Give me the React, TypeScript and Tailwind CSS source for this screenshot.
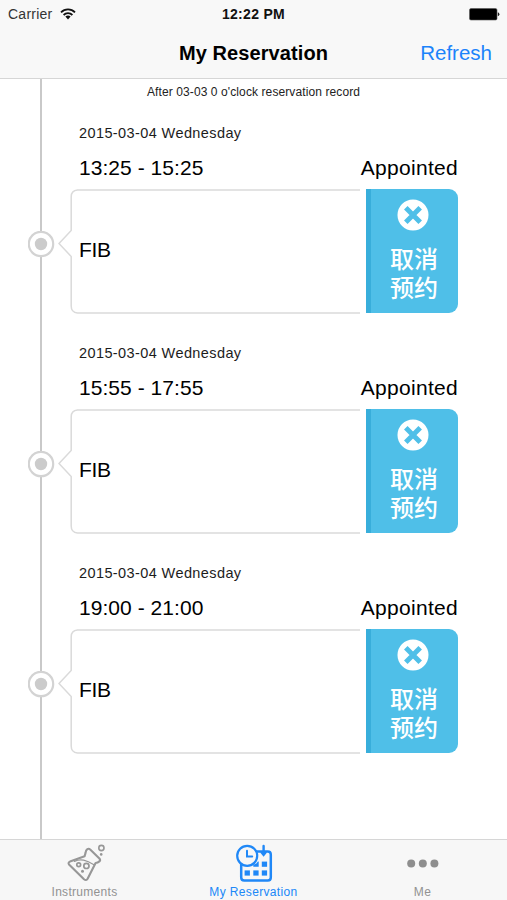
const reservations = [
  { date: '2015-03-04 Wednesday', time: '13:25 - 15:25', status: 'Appointed', name: 'FIB' },
  { date: '2015-03-04 Wednesday', time: '15:55 - 17:55', status: 'Appointed', name: 'FIB' },
  { date: '2015-03-04 Wednesday', time: '19:00 - 21:00', status: 'Appointed', name: 'FIB' },
];

function WifiIcon() {
  return (
    <svg width="16" height="12" viewBox="0 0 16 12" fill="none" stroke="#111" strokeWidth="1.8">
      <path d="M1 4.3a10 10 0 0 1 14 0M3.6 7a6.3 6.3 0 0 1 8.8 0" />
      <path d="M5.4 8.6a3.8 3.8 0 0 1 5.2 0L8 11.4Z" fill="#111" stroke="none" />
    </svg>
  );
}

function BatteryIcon() {
  return (
    <svg width="31" height="13" viewBox="0 0 31 13">
      <rect x="0.5" y="0.5" width="27.5" height="11.5" rx="1.5" fill="#000" stroke="#555" strokeWidth="0.6" />
      <path d="M28.8 4.2q1.6.6 1.6 2t-1.6 2Z" fill="#222" />
    </svg>
  );
}

function FlaskIcon() {
  return (
    <svg width="40" height="38" viewBox="64 844 40 38" fill="none" stroke="#979797" strokeWidth="2.1" strokeLinejoin="round" strokeLinecap="round">
      <path d="M84.6 852.6Q84.8 850.4 86.4 849.2Q87.8 848.2 89.2 849.6L98.4 858.4Q99.8 860.2 98.4 861.4Q96.8 862.8 94.6 863L86.6 878.8Q85.2 881 83 879.2L68 864.4Q66.8 862.6 69 861.6L83.6 856.2Z" />
      <path d="M73.5 861.4Q78 859.2 82.6 860.2T92.5 864.6" strokeWidth="1.2" />
      <circle cx="77.7" cy="864.8" r="1.9" strokeWidth="1.7" />
      <circle cx="85.4" cy="865.9" r="2.6" strokeWidth="1.7" />
      <circle cx="81.5" cy="871.3" r="1.5" fill="#979797" stroke="none" />
      <circle cx="100.4" cy="848" r="2.6" strokeWidth="1.6" />
      <circle cx="100.2" cy="854.4" r="1.3" fill="#979797" stroke="none" />
    </svg>
  );
}

function CalendarClockIcon() {
  return (
    <svg width="38" height="38" viewBox="235 844 38 38" fill="none" stroke="#2088f7" strokeWidth="2.5" strokeLinecap="round">
      <path d="M241.2 864v13.6q0 3 3 3h23.6q3 0 3-3v-23.2q0-3-3-3H256" />
      <circle cx="247.2" cy="855.8" r="10" fill="#f7f7f7" strokeWidth="2.2" />
      <path d="M247 850.8v5.8h5.2" strokeWidth="2" />
      <path d="M263.6 846v8.4M261.7 852.4l1.9 2.4 1.9-2.4" strokeWidth="2.4" />
      <g fill="#2088f7" stroke="none">
        <path d="M258.7 861.4v5.4h-5.4v-2.1q3.3-.7 4.6-3.3Z" />
        <rect x="261.8" y="861.6" width="5.3" height="5.2" />
        <rect x="244.6" y="870.4" width="5.3" height="5.2" />
        <rect x="253.3" y="870.4" width="5.3" height="5.2" />
        <rect x="261.8" y="870.4" width="5.3" height="5.2" />
      </g>
    </svg>
  );
}

function DotsIcon() {
  return (
    <svg width="32" height="38" viewBox="0 0 32 38" fill="#8e8e8e">
      <circle cx="4.2" cy="19.5" r="4" />
      <circle cx="15.8" cy="19.5" r="4" />
      <circle cx="27.4" cy="19.5" r="4" />
    </svg>
  );
}

function BubbleOutline() {
  return (
    <svg className="block shrink-0" width="302" height="125" viewBox="0 0 302 125" fill="none" stroke="#dadada" strokeWidth="1.5">
      <path d="M302 .9H19.5Q13.2 1.6 13.2 7.5V41.5L1 54.5L13.2 67.5V117Q13.2 123.4 19.5 124H302" fill="#fff" />
    </svg>
  );
}

function CancelButton() {
  return (
    <button className="flex h-[124px] w-[92px] flex-col items-center rounded-r-[9px] border-l-[5px] border-[#38aedb] bg-[#4fbfe8] pt-[10px] text-white">
      <svg className="mr-[3px]" width="32" height="32" viewBox="0 0 32 32">
        <circle cx="16" cy="16" r="15.5" fill="#fff" />
        <path d="M8.8 8.8l14.4 14.4M23.2 8.8L8.8 23.2" stroke="#4fbfe8" strokeWidth="5" />
      </svg>
      <span className="mt-[14px] mr-px w-[50px] text-center font-['Liberation_Sans','Noto_Sans_CJK_SC',sans-serif] text-[24px] font-medium">
        <span className="block h-[29px] leading-[29px]">取消</span>
        <span className="block h-[29px] leading-[29px]">预约</span>
      </span>
    </button>
  );
}

function Reservation({ item }: { item: (typeof reservations)[number] }) {
  return (
    <li className="h-[220px] pt-[15px]">
      <div className="ml-[79px] h-4 text-[14.5px] leading-4 tracking-[0.4px] whitespace-nowrap text-[#1c1c1c]">{item.date}</div>
      <div className="mt-[15px] mr-[49px] ml-[79px] flex h-6 justify-between text-[21px] leading-6 whitespace-nowrap">
        <span className="tracking-[0.05px]">{item.time}</span>
        <span className="tracking-[0.3px]">{item.status}</span>
      </div>
      <div className="mt-[9px] flex h-[125px] pl-[28px]">
        <svg className="mt-[42px] mr-[3px] block shrink-0" width="27" height="27" viewBox="0 0 27 27">
          <circle cx="13" cy="13" r="12.2" fill="#fff" stroke="#d3d3d3" strokeWidth="2.2" />
          <circle cx="13" cy="13" r="6.2" fill="#cbcbcb" />
        </svg>
        <div className="grid w-[308px] shrink-0">
          <div className="col-start-1 row-start-1">
            <BubbleOutline />
          </div>
          <div className="col-start-1 row-start-1 mt-[49px] ml-[21px] text-[21px] leading-6 tracking-[-0.3px]">{item.name}</div>
        </div>
        <CancelButton />
      </div>
    </li>
  );
}

export default function App() {
  return (
    <div className="flex h-[900px] w-[507px] flex-col overflow-hidden bg-white font-['Liberation_Sans',Arial,sans-serif] text-black">
      <header className="h-[79px] shrink-0 border-b border-[#d6d6d6] bg-[#f8f8f8]">
        <div className="grid h-[28px] grid-cols-3 items-center px-[7px] text-[14px] leading-4">
          <div className="flex items-center gap-[7px] pl-px text-[#333]">
            <span className="tracking-[0.25px]">Carrier</span>
            <WifiIcon />
          </div>
          <span className="text-center font-bold tracking-[0.3px] text-[#111]">12:22 PM</span>
          <div className="flex justify-end">
            <BatteryIcon />
          </div>
        </div>
        <div className="grid h-[50px] grid-cols-[1fr_auto_1fr] items-center px-[15px]">
          <h1 className="col-start-2 text-[20px] font-bold tracking-[0.1px]">My Reservation</h1>
          <button className="justify-self-end text-[20.5px] text-[#1c83fb]">Refresh</button>
        </div>
      </header>

      <main className="h-[760px] shrink-0 bg-[linear-gradient(#c9c9c9,#c9c9c9)] bg-[length:2px_100%] bg-[position:40px_0] bg-no-repeat">
        <p className="h-[31px] pt-[5px] text-center text-[12px] leading-4 tracking-[0.1px] text-[#222]">After 03-03 0 o'clock reservation record</p>
        <ul>
          {reservations.map((item) => (
            <Reservation key={item.time} item={item} />
          ))}
        </ul>
      </main>

      <nav className="grid h-[61px] shrink-0 grid-cols-3 border-t border-[#d6d6d6] bg-[#f7f7f7] pt-1 text-[12px] leading-4 text-[#929292]">
        <div className="flex flex-col items-center">
          <FlaskIcon />
          <span className="mt-[2px] tracking-[0.3px]">Instruments</span>
        </div>
        <div className="flex flex-col items-center text-[#2088f7]">
          <CalendarClockIcon />
          <span className="mt-[2px] tracking-[0.35px]">My Reservation</span>
        </div>
        <div className="flex flex-col items-center">
          <DotsIcon />
          <span className="mt-[2px] tracking-[0.3px]">Me</span>
        </div>
      </nav>
    </div>
  );
}
